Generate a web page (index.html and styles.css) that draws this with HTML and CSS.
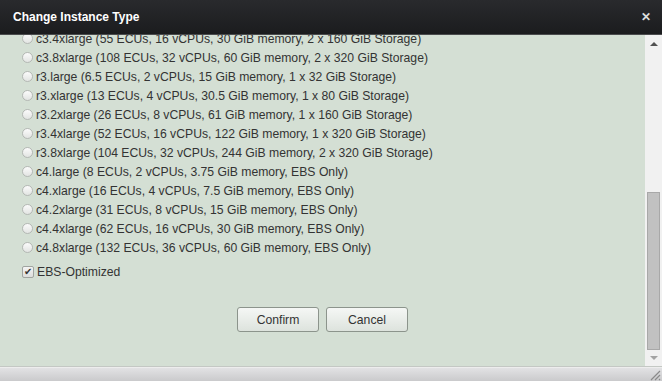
FILE: index.html
```html
<!DOCTYPE html>
<html>
	<head>
		<title>Change Instance Type</title>
		<meta charset="utf-8">
		<link rel="stylesheet" href="styles.css">
	</head>

	<body>
		<div class="dialog">
			<div class="titlebar">
				<h1>Change Instance Type</h1>
				<span class="close">&#x2715;</span>
			</div>

			<div class="main">
				<div class="pane">
					<div class="list">
						<label class="opt"><span class="radio"></span>c3.4xlarge (55 ECUs, 16 vCPUs, 30 GiB memory, 2 x 160 GiB Storage)</label>
						<label class="opt"><span class="radio"></span>c3.8xlarge (108 ECUs, 32 vCPUs, 60 GiB memory, 2 x 320 GiB Storage)</label>
						<label class="opt"><span class="radio"></span>r3.large (6.5 ECUs, 2 vCPUs, 15 GiB memory, 1 x 32 GiB Storage)</label>
						<label class="opt"><span class="radio"></span>r3.xlarge (13 ECUs, 4 vCPUs, 30.5 GiB memory, 1 x 80 GiB Storage)</label>
						<label class="opt"><span class="radio"></span>r3.2xlarge (26 ECUs, 8 vCPUs, 61 GiB memory, 1 x 160 GiB Storage)</label>
						<label class="opt"><span class="radio"></span>r3.4xlarge (52 ECUs, 16 vCPUs, 122 GiB memory, 1 x 320 GiB Storage)</label>
						<label class="opt"><span class="radio"></span>r3.8xlarge (104 ECUs, 32 vCPUs, 244 GiB memory, 2 x 320 GiB Storage)</label>
						<label class="opt"><span class="radio"></span>c4.large (8 ECUs, 2 vCPUs, 3.75 GiB memory, EBS Only)</label>
						<label class="opt"><span class="radio"></span>c4.xlarge (16 ECUs, 4 vCPUs, 7.5 GiB memory, EBS Only)</label>
						<label class="opt"><span class="radio"></span>c4.2xlarge (31 ECUs, 8 vCPUs, 15 GiB memory, EBS Only)</label>
						<label class="opt"><span class="radio"></span>c4.4xlarge (62 ECUs, 16 vCPUs, 30 GiB memory, EBS Only)</label>
						<label class="opt"><span class="radio"></span>c4.8xlarge (132 ECUs, 36 vCPUs, 60 GiB memory, EBS Only)</label>

						<label class="opt ebs"><span class="check">&#x2714;</span>EBS-Optimized</label>
					</div>

					<div class="buttons">
						<button class="btn">Confirm</button>
						<button class="btn">Cancel</button>
					</div>
				</div>

				<div class="scrollbar">
					<span class="arrow up"></span>
					<div class="track"><div class="thumb"></div></div>
					<span class="arrow down"></span>
				</div>
			</div>

			<div class="footer">
				<svg class="grip" width="12" height="12" viewBox="0 0 12 12">
					<path d="M11 2 L2 11 M11 6 L6 11 M11 10 L10 11" stroke="#8a8a8a" stroke-width="1.2"/>
				</svg>
			</div>
		</div>
	</body>
</html>
```

FILE: styles.css
```css
html,body {
	margin: 0;
	padding: 0;
	background-color: #d4dfd4;
}

.dialog {
	display: flex;
	flex-direction: column;
	width: 662px;
	height: 381px;
	overflow: hidden;
	font-family: "Liberation Sans", Arial, sans-serif;
	font-size: 12.2px;
	color: #333;
}

.titlebar {
	display: flex;
	align-items: center;
	justify-content: space-between;
	height: 34px;
	padding: 0 13px;
	background: linear-gradient(#292a2d, #1b1c1e);
	border-bottom: 1px solid #4a4b4d;
	flex-shrink: 0;
}

.titlebar h1 {
	margin: 0;
	font-size: 12px;
	font-weight: bold;
	color: #fff;
}

.close {
	color: #ddd;
	font-size: 12px;
	font-weight: bold;
	margin-right: -2px;
}

.main {
	display: flex;
	flex: 1;
	min-height: 0;
	border-bottom: 1px solid #c4c8c4;
}

.pane {
	flex: 1;
	overflow: hidden;
}

.list {
	display: flex;
	flex-direction: column;
	margin-top: -6px;
	padding-left: 22px;
}

.opt {
	display: flex;
	align-items: center;
	height: 19px;
	white-space: nowrap;
}

.radio {
	width: 11px;
	height: 11px;
	margin-right: 3px;
	border: 1px solid #b4b8b4;
	border-radius: 50%;
	background: linear-gradient(#fbfbfb, #e2e4e2);
	box-sizing: border-box;
	flex-shrink: 0;
}

.ebs {
	margin-top: 5px;
}

.check {
	display: flex;
	align-items: center;
	justify-content: center;
	width: 12px;
	height: 12px;
	margin-right: 3px;
	border: 1px solid #a0a4a0;
	border-radius: 2px;
	background: linear-gradient(#f4f4f4, #dcdedc);
	box-sizing: border-box;
	font-size: 10px;
	color: #333;
	line-height: 1;
}

.buttons {
	display: flex;
	justify-content: center;
	gap: 7px;
	margin-top: 26px;
}

.btn {
	width: 82px;
	height: 25px;
	border: 1px solid #8c948c;
	border-radius: 3px;
	background: linear-gradient(#f5f7f5, #dde3dd);
	font-family: "Liberation Sans", Arial, sans-serif;
	font-size: 12.2px;
	color: #333;
	padding: 0;
}

.scrollbar {
	display: flex;
	flex-direction: column;
	align-items: center;
	width: 17px;
	background-color: #f1f1f1;
	flex-shrink: 0;
}

.arrow {
	width: 0;
	height: 0;
	border-left: 4px solid transparent;
	border-right: 4px solid transparent;
	margin: 6px 0;
}

.arrow.up {
	border-bottom: 4px solid #505050;
	margin-top: 7px;
}

.arrow.down {
	border-top: 4px solid #a3a3a3;
	margin-bottom: 6px;
}

.track {
	flex: 1;
	width: 100%;
	display: flex;
	flex-direction: column;
	justify-content: flex-end;
	align-items: center;
}

.thumb {
	width: 13px;
	height: 158px;
	background-color: #c1c1c1;
	border: 1px solid #a8a8a8;
	box-sizing: border-box;
}

.footer {
	display: flex;
	justify-content: flex-end;
	align-items: flex-end;
	height: 13px;
	background: linear-gradient(#e2e2e4, #cacacc);
	border-top: 1px solid #ededed;
	flex-shrink: 0;
}

.grip {
	display: block;
	margin: 0 1px 0 0;
}
```
